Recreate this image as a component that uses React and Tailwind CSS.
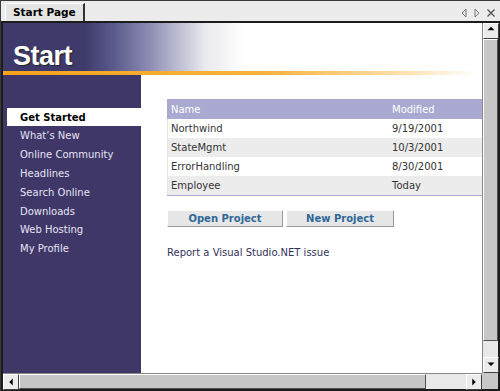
import React from 'react';

const menu = ['What\u2019s New', 'Online Community', 'Headlines', 'Search Online', 'Downloads', 'Web Hosting', 'My Profile'];

const projects = [
  { name: 'Northwind', modified: '9/19/2001' },
  { name: 'StateMgmt', modified: '10/3/2001' },
  { name: 'ErrorHandling', modified: '8/30/2001' },
  { name: 'Employee', modified: 'Today' },
];

function Arrow({ dir }) {
  // small black triangle used by the scroll buttons
  const pts = {
    up: '4,7 8,3 12,7',
    down: '4,5 8,9 12,5',
    left: '6,8 10,4 10,12',
    right: '6,4 10,8 6,12',
  };
  return (
    <svg width="16" height="16" viewBox="0 0 16 16">
      <polygon points={pts[dir]} fill="#000" />
    </svg>
  );
}

function ScrollButton({ dir }) {
  return (
    <div className="w-[16px] h-[16px] shrink-0 bg-[#ececec] border-t border-l border-t-white border-l-white border-r border-b border-r-[#404040] border-b-[#404040] flex items-center justify-center">
      <Arrow dir={dir} />
    </div>
  );
}

export default function App() {
  return (
    <div className="w-[500px] h-[391px] flex flex-col bg-[#ececec] border-l border-t border-[#3a3a3a] font-['DejaVu_Sans',Verdana,sans-serif] text-[10px] overflow-hidden">
      {/* Tab strip */}
      <div className="h-[20px] shrink-0 flex items-end justify-between pl-[4px] pr-[4px]">
        <div className="h-[18px] px-[7px] bg-[#e4e4e4] border-t border-l border-white border-r-2 border-r-[#333] flex items-center whitespace-nowrap font-bold text-[10.5px] text-black">
          Start Page
        </div>
        <div className="flex items-center gap-[5px] pb-[3px] text-[#666]">
          <svg width="8" height="10" viewBox="0 0 8 10"><polygon points="6,1 2,5 6,9" fill="none" stroke="#777" strokeWidth="1" /></svg>
          <svg width="8" height="10" viewBox="0 0 8 10"><polygon points="2,1 6,5 2,9" fill="none" stroke="#777" strokeWidth="1" /></svg>
          <svg width="10" height="10" viewBox="0 0 10 10"><path d="M1.5 1.5 L8.5 8.5 M8.5 1.5 L1.5 8.5" stroke="#555" strokeWidth="1.4" /></svg>
        </div>
      </div>

      {/* Framed document */}
      <div className="flex-1 min-h-0 border-2 border-[#1c1c1c] grid grid-cols-[1fr_16px] grid-rows-[1fr_16px] bg-white">
        <div className="flex flex-col min-h-0 overflow-hidden">
          {/* Banner */}
          <div className="h-[48px] shrink-0 flex items-end pl-[10px] pb-[1px] bg-[linear-gradient(90deg,#3f3a6c_0%,#3f3a6c_17%,#5a5a8c_23%,#8888b0_30%,#b8b8cf_36%,#e8e8ee_42%,#ffffff_50%)]">
            <span className="font-['Liberation_Sans',Arial,sans-serif] font-bold text-[27px] leading-none text-white tracking-[-0.5px] [text-shadow:1px_1px_1px_#222]">
              Start
            </span>
          </div>
          <div className="h-[4px] shrink-0 bg-[linear-gradient(90deg,#f7a21c_0%,#f9b23d_55%,#fde3b4_85%,#ffffff_99%)]" />

          {/* Body */}
          <div className="flex-1 min-h-0 flex">
            <div className="w-[138px] shrink-0 bg-[#3f3768] pt-[33px] pl-[4px]">
              <div className="h-[18px] bg-white flex items-center pl-[13px] font-bold text-black">Get Started</div>
              {menu.map((item) => (
                <div key={item} className="h-[18.9px] flex items-center pl-[13px] text-[#e6e4f2]">
                  {item}
                </div>
              ))}
            </div>

            <div className="flex-1 pl-[26px] pt-[24px]">
              <div className="border-b border-[#aeaed2]">
                <div className="h-[20px] bg-[#a9a9d2] flex items-center text-white">
                  <div className="w-[225px] pl-[4px]">Name</div>
                  <div>Modified</div>
                </div>
                {projects.map((p, i) => (
                  <div
                    key={p.name}
                    className={`h-[19px] flex items-center text-[#333] border-l border-[#e4e4e4] ${i % 2 ? 'bg-[#ececec]' : 'bg-white'}`}
                  >
                    <div className="w-[224px] pl-[3px]">{p.name}</div>
                    <div>{p.modified}</div>
                  </div>
                ))}
              </div>

              <div className="flex gap-[3px] mt-[14px]">
                <button className="w-[116px] h-[17px] bg-[#e6e6e6] border-t border-l border-white border-r border-b border-r-[#9a9a9a] border-b-[#9a9a9a] font-bold text-[#2f6796] leading-none">
                  Open Project
                </button>
                <button className="w-[108px] h-[17px] bg-[#e6e6e6] border-t border-l border-white border-r border-b border-r-[#9a9a9a] border-b-[#9a9a9a] font-bold text-[#2f6796] leading-none">
                  New Project
                </button>
              </div>

              <div className="mt-[18px] text-[#33335a]">Report a Visual Studio.NET issue</div>
            </div>
          </div>
        </div>

        {/* Vertical scrollbar */}
        <div className="flex flex-col bg-[#e8e8e8] border-l border-[#888]">
          <ScrollButton dir="up" />
          <div className="flex-1 bg-[#c6c6c6] border-r border-b border-[#505050] border-t border-l border-t-white border-l-white" />
          <div className="h-[16px] shrink-0" />
          <ScrollButton dir="down" />
        </div>

        {/* Horizontal scrollbar */}
        <div className="flex bg-[#e8e8e8] border-t border-[#888]">
          <ScrollButton dir="left" />
          <div className="w-[407px] bg-[#c6c6c6] border-r border-b border-[#505050] border-t border-l border-t-white border-l-white" />
          <div className="flex-1" />
          <ScrollButton dir="right" />
        </div>

        <div className="bg-[#c8c8c8]" />
      </div>
    </div>
  );
}
